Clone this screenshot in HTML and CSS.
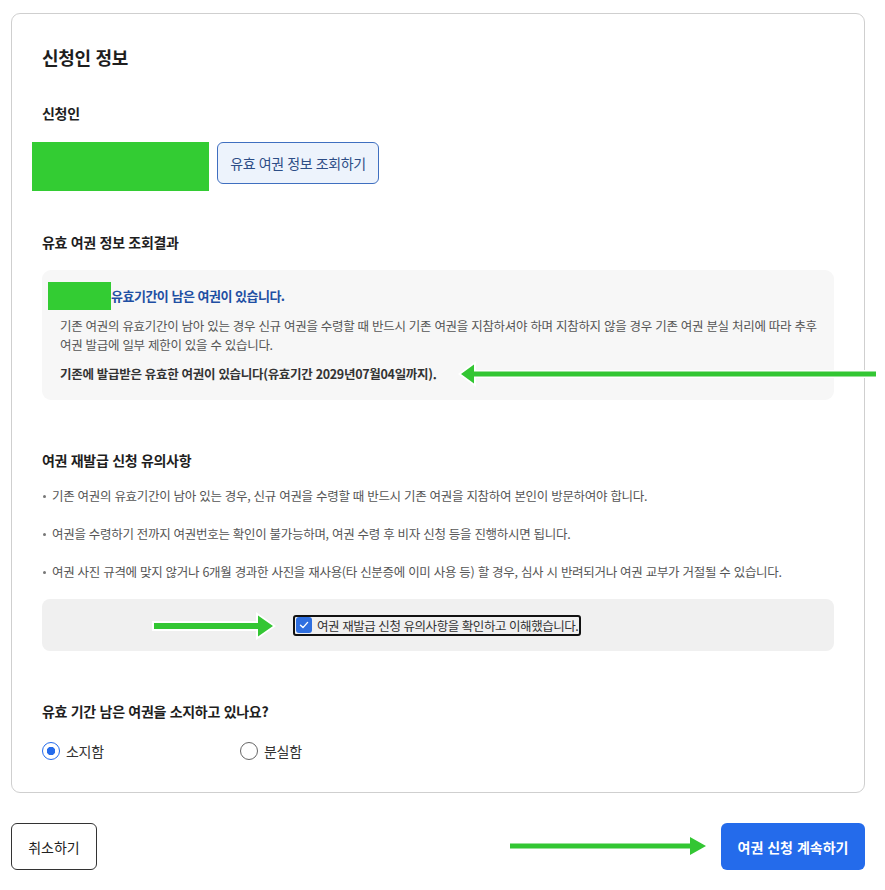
FILE: index.html
```html
<!DOCTYPE html>
<html lang="ko">
<head>
    <meta charset="utf-8"/>
    <title>신청인 정보</title>
    <link rel="stylesheet" href="styles.css">
</head>
<body>
<div class="page">
    <section class="card">
        <h1 class="card-title">신청인 정보</h1>

        <h2 class="label first">신청인</h2>
        <div class="applicant-row">
            <div class="mask mask-name"></div>
            <button type="button" class="btn-lookup">유효 여권 정보 조회하기</button>
        </div>

        <h2 class="label">유효 여권 정보 조회결과</h2>
        <div class="result-box">
            <div class="result-head">
                <div class="mask mask-small"></div>
                <strong class="result-title">유효기간이 남은 여권이 있습니다.</strong>
            </div>
            <p class="result-desc">기존 여권의 유효기간이 남아 있는 경우 신규 여권을 수령할 때 반드시 기존 여권을 지참하셔야 하며 지참하지 않을 경우 기존 여권 분실 처리에 따라 추후 여권 발급에 일부 제한이 있을 수 있습니다.</p>
            <p class="result-strong">기존에 발급받은 유효한 여권이 있습니다(유효기간 2029년07월04일까지).</p>
        </div>

        <h2 class="label wide">여권 재발급 신청 유의사항</h2>
        <ul class="notes">
            <li>기존 여권의 유효기간이 남아 있는 경우, 신규 여권을 수령할 때 반드시 기존 여권을 지참하여 본인이 방문하여야 합니다.</li>
            <li>여권을 수령하기 전까지 여권번호는 확인이 불가능하며, 여권 수령 후 비자 신청 등을 진행하시면 됩니다.</li>
            <li>여권 사진 규격에 맞지 않거나 6개월 경과한 사진을 재사용(타 신분증에 이미 사용 등) 할 경우, 심사 시 반려되거나 여권 교부가 거절될 수 있습니다.</li>
        </ul>
        <div class="agree-box">
            <label class="agree">
                <span class="checkbox">
                    <svg width="12" height="12" viewBox="0 0 12 12"><path d="M2.5 6.2 L5 8.6 L9.6 3.4" fill="none" stroke="#fff" stroke-width="1.4" stroke-linecap="round" stroke-linejoin="round"/></svg>
                </span>
                여권 재발급 신청 유의사항을 확인하고 이해했습니다.
            </label>
        </div>

        <h2 class="label wide">유효 기간 남은 여권을 소지하고 있나요?</h2>
        <div class="radios">
            <label class="radio"><span class="radio-dot checked"></span>소지함</label>
            <label class="radio"><span class="radio-dot"></span>분실함</label>
        </div>
    </section>

    <div class="actions">
        <button type="button" class="btn-cancel">취소하기</button>
        <button type="button" class="btn-primary">여권 신청 계속하기</button>
    </div>

    <!-- annotation arrows drawn over the screenshot -->
    <svg class="arrow arrow-result" width="425" height="34" viewBox="0 0 425 34">
        <path d="M2 17 L20 4 L20 13 L423 13 L423 21 L20 21 L20 30 Z" fill="#fff"/>
        <path d="M5 17 L18 7.5 L18 14.5 L420 14.5 L420 19.5 L18 19.5 L18 26.5 Z" fill="#33c633"/>
    </svg>
    <svg class="arrow arrow-agree" width="128" height="34" viewBox="0 0 128 34">
        <path d="M126 17 L106 3 L106 12 L2 12 L2 22 L106 22 L106 31 Z" fill="#fff"/>
        <path d="M123 17 L108 6.5 L108 14 L4 14 L4 20 L108 20 L108 27.5 Z" fill="#33c633"/>
    </svg>
    <svg class="arrow arrow-next" width="200" height="22" viewBox="0 0 200 22">
        <path d="M196 11 L180 2 L180 8.5 L0 8.5 L0 13.5 L180 13.5 L180 20 Z" fill="#33c633"/>
    </svg>
</div>
</body>
</html>
```

FILE: styles.css
```css
* {
    box-sizing: border-box;
}
body {
    margin: 0;
    font-family: "Noto Sans CJK KR", "Noto Sans", sans-serif;
    color: #1e1e1e;
    background: #fff;
    letter-spacing: -0.3px;
}
.page {
    position: relative;
    padding: 13px 20px 0 11px;
}
.card {
    border: 1px solid #cfcfcf;
    border-radius: 9px;
    padding: 30px 30px 31px 30px;
}
.card-title {
    margin: 0;
    font-size: 18px;
    line-height: 26px;
    font-weight: 700;
}
.label {
    margin: 41px 0 18px;
    font-size: 14px;
    line-height: 20px;
    font-weight: 700;
}
.label.first {
    margin: 33px 0 19px;
}
.label.wide {
    margin-top: 50px;
    margin-bottom: 16px;
}
.applicant-row {
    display: flex;
    align-items: flex-start;
    gap: 8px;
    margin-left: -10px;
}
.mask {
    background: #33cc33;
}
.mask-name {
    width: 177px;
    height: 49px;
}
.btn-lookup {
    height: 42px;
    width: 162px;
    padding: 0;
    border: 1px solid #3f6fc0;
    border-radius: 6px;
    background: #edf3fc;
    color: #2d4d86;
    font-family: inherit;
    font-size: 14px;
    letter-spacing: -0.4px;
}
.result-box {
    background: #f7f7f7;
    border-radius: 9px;
    padding: 12px 6px 17px 6px;
}
.result-head {
    display: flex;
    align-items: center;
}
.mask-small {
    width: 63px;
    height: 28px;
}
.result-title {
    font-size: 13px;
    line-height: 20px;
    color: #1f4fa3;
    letter-spacing: -0.5px;
}
.result-desc {
    margin: 6px 0 0 12px;
    font-size: 12.5px;
    line-height: 19px;
    color: #555;
}
.result-strong {
    margin: 10px 0 0 12px;
    font-size: 12.5px;
    line-height: 19px;
    font-weight: 700;
    color: #333;
}
.notes {
    list-style: none;
    margin: 0;
    padding: 0;
}
.notes li {
    position: relative;
    padding-left: 10px;
    font-size: 12.5px;
    line-height: 20px;
    color: #555;
    margin-bottom: 18px;
}
.notes li::before {
    content: "";
    position: absolute;
    left: 1px;
    top: 9px;
    width: 3px;
    height: 3px;
    border-radius: 50%;
    background: #777;
}
.notes li:last-child {
    margin-bottom: 17px;
}
.agree-box {
    height: 52px;
    background: #f0f0f0;
    border-radius: 8px;
    display: flex;
    align-items: center;
    padding-left: 251px;
}
.agree {
    display: inline-flex;
    align-items: center;
    gap: 5px;
    padding: 0 1px;
    height: 21px;
    border: 2px solid #111;
    border-radius: 3px;
    font-size: 12.5px;
    color: #333;
    letter-spacing: -0.45px;
}
.checkbox {
    width: 16px;
    height: 16px;
    border-radius: 3px;
    background: #2f6fe0;
    display: inline-flex;
    align-items: center;
    justify-content: center;
}
.radios {
    display: flex;
    margin-top: 20px;
}
.radio {
    display: flex;
    align-items: center;
    gap: 6px;
    width: 198px;
    font-size: 14px;
    line-height: 20px;
    color: #333;
}
.radio-dot {
    width: 18px;
    height: 18px;
    border: 1.5px solid #666;
    border-radius: 50%;
    background: #fff;
}
.radio-dot.checked {
    border-color: #246beb;
    background: radial-gradient(circle, #246beb 0 4px, #fff 4.5px);
}
.actions {
    display: flex;
    justify-content: space-between;
    margin-top: 30px;
}
.actions button {
    height: 47px;
    border-radius: 6px;
    font-family: inherit;
    font-size: 14px;
}
.btn-cancel {
    width: 86px;
    border: 1px solid #333;
    background: #fff;
    color: #222;
}
.btn-primary {
    width: 144px;
    border: 0;
    background: #246beb;
    color: #fff;
    font-weight: 700;
}
.arrow {
    position: absolute;
}
.arrow-result {
    left: 456px;
    top: 357px;
}
.arrow-agree {
    left: 150px;
    top: 609px;
}
.arrow-next {
    left: 510px;
    top: 835px;
}
```
